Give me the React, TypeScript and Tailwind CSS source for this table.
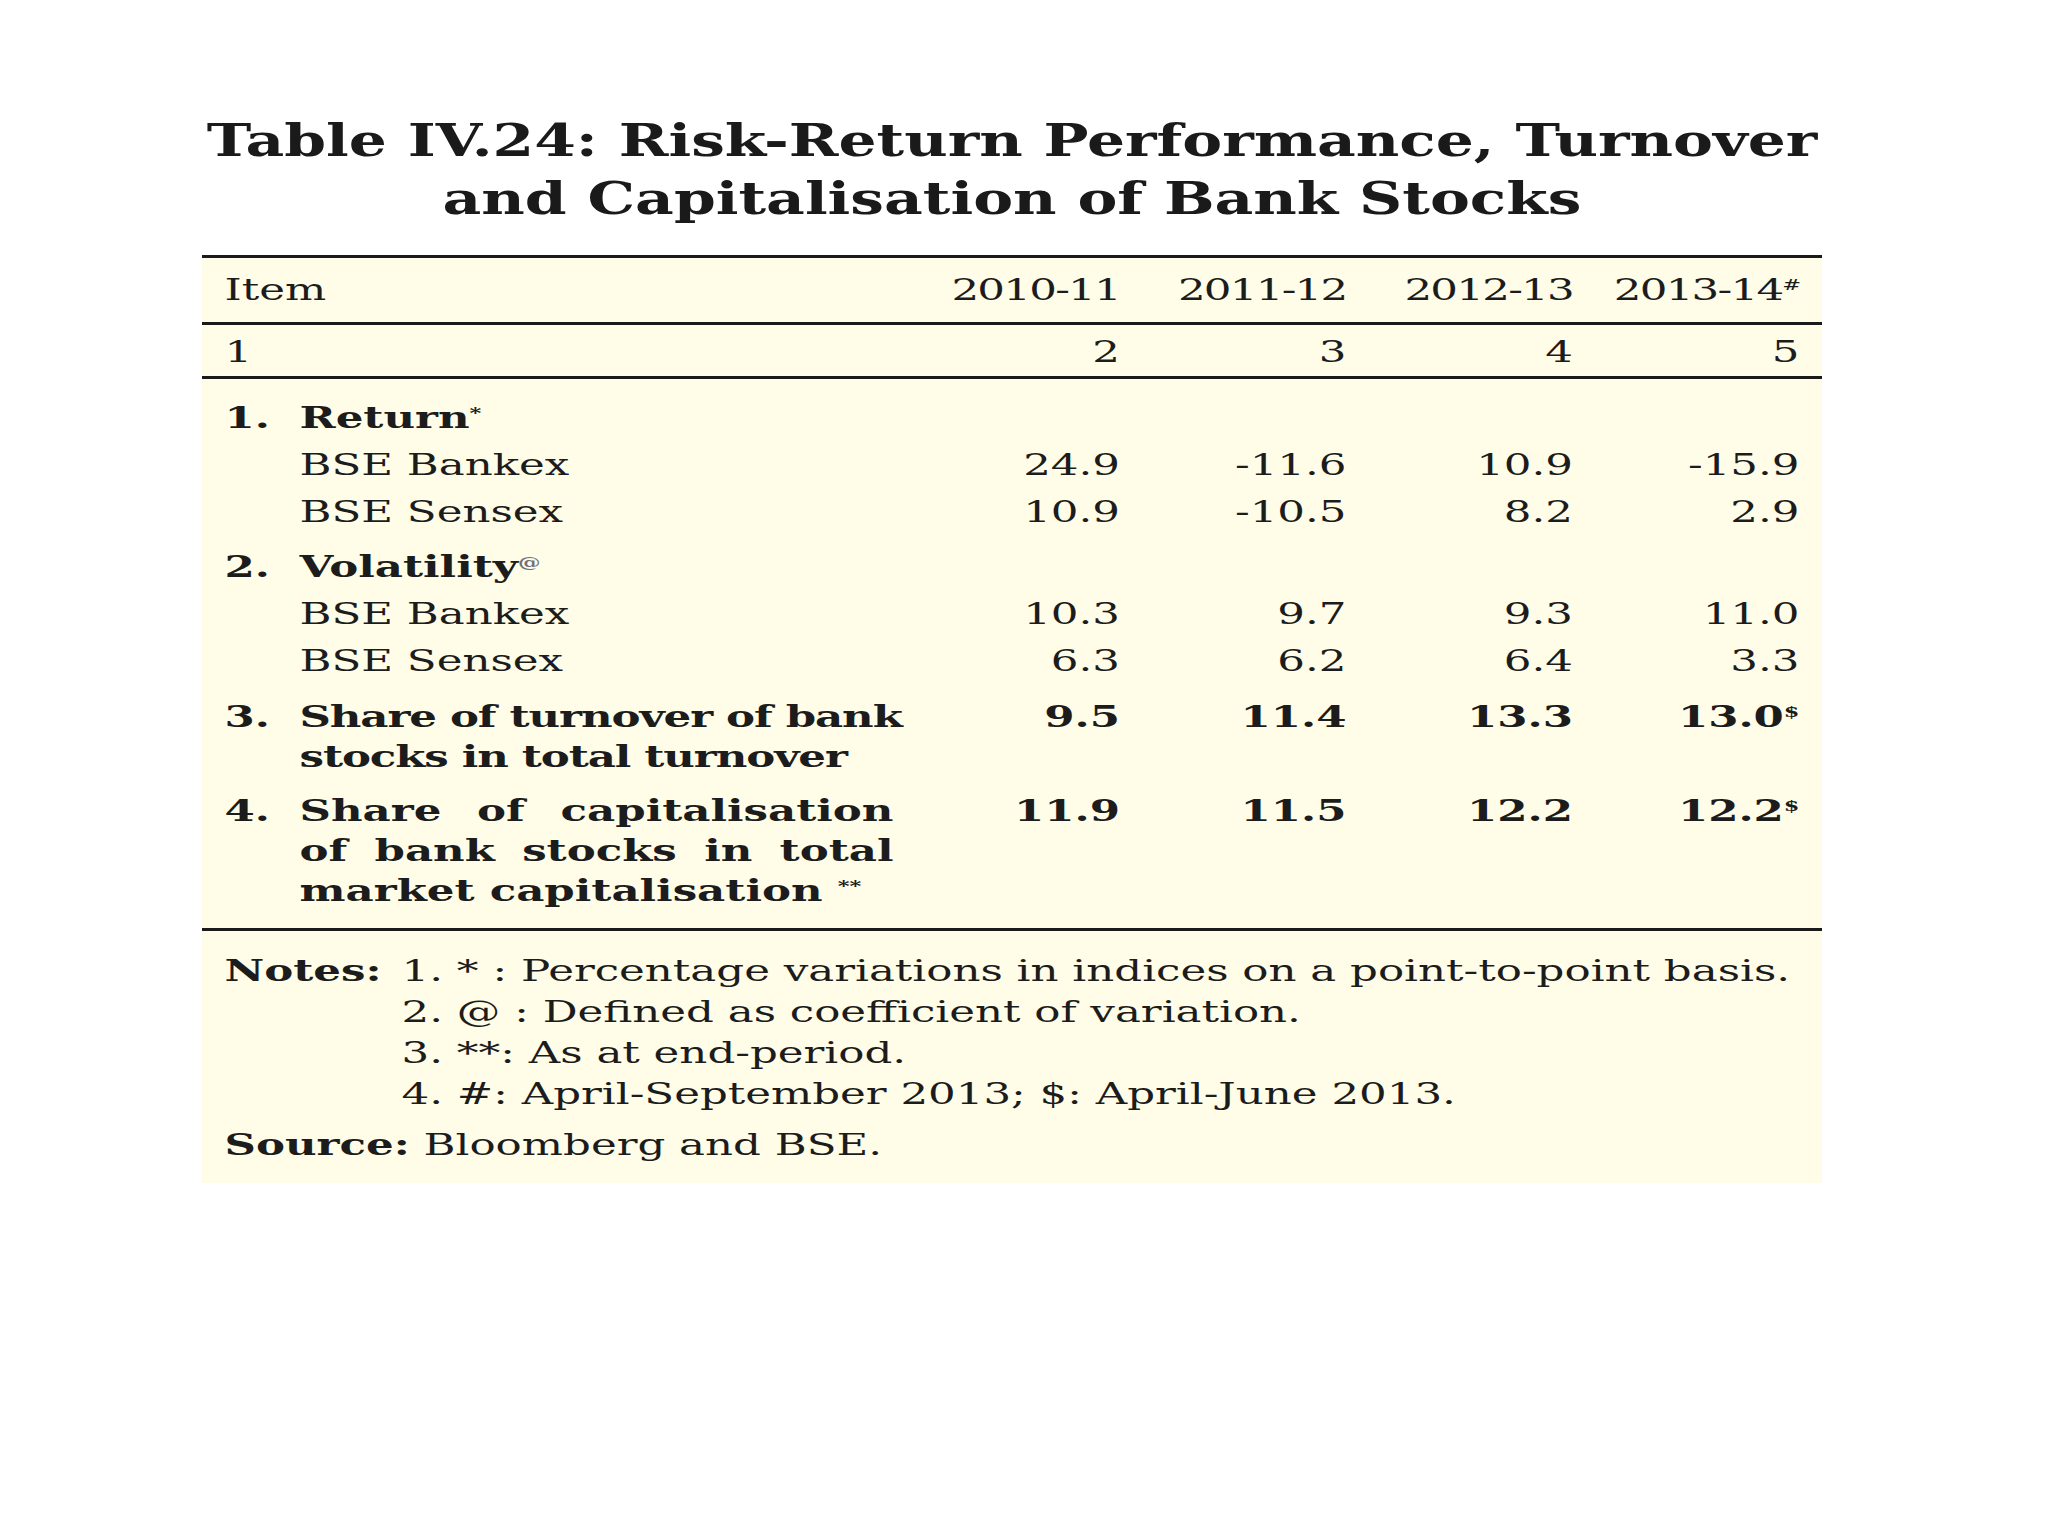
import React from 'react';

interface RowProps {
  num?: string;
  label?: React.ReactNode;
  values?: React.ReactNode[];
  bold?: boolean;
  className?: string;
}

const Sup: React.FC<{ children: React.ReactNode; className?: string }> = ({ children, className = '' }) => (
  <span className={`relative -top-[10px] text-[15px] leading-[0] ${className}`}>{children}</span>
);

const Row: React.FC<RowProps> = ({ num, label, values = [], bold, className = '' }) => (
  <div className={`grid grid-cols-[50px_396px_151px_151px_151px_151px] ${bold ? 'font-bold' : ''} ${className}`}>
    <div>{num}</div>
    <div className="whitespace-nowrap">{label}</div>
    {[0, 1, 2, 3].map((i) => (
      <div key={i} className="text-right whitespace-nowrap">
        {values[i]}
      </div>
    ))}
  </div>
);

const App: React.FC = () => {
  return (
    <div className="min-h-screen w-full bg-white font-['DejaVu_Serif',serif] text-[#1c1c1c]">
      <div className="ml-[202px] w-[1620px] pt-[112px]">
        {/* title */}
        <h1 className="scale-x-[1.36] text-center text-[44px] leading-[58px] font-bold text-[#1a1a1a]">
          Table IV.24: Risk-Return Performance, Turnover
          <br />
          and Capitalisation of Bank Stocks
        </h1>

        <div className="mt-[27px] w-[1080px] origin-left scale-x-150 text-[29px]">
          <div className="border-t-[3px] border-[#1a1a1a] bg-[#fffde8]">
            {/* header */}
            <div className="grid grid-cols-[50px_396px_151px_151px_151px_151px] px-[15px] leading-[64px]">
              <div className="col-span-2">Item</div>
              <div className="text-right tracking-[-0.04em]">2010-11</div>
              <div className="text-right tracking-[-0.04em]">2011-12</div>
              <div className="text-right tracking-[-0.04em]">2012-13</div>
              <div className="text-right whitespace-nowrap tracking-[-0.04em]">
                2013-14<Sup>#</Sup>
              </div>
            </div>
            <div className="border-t-[3px] border-[#1a1a1a]" />
            <div className="grid grid-cols-[50px_396px_151px_151px_151px_151px] px-[15px] pt-[4px] leading-[47px]">
              <div className="col-span-2">1</div>
              <div className="text-right">2</div>
              <div className="text-right">3</div>
              <div className="text-right">4</div>
              <div className="text-right">5</div>
            </div>
            <div className="border-t-[3px] border-[#1a1a1a]" />

            {/* body */}
            <div className="px-[15px] pt-[16px] pb-[17px]">
              <div className="leading-[47px]">
                <Row num="1." bold label={<>Return<Sup>*</Sup></>} />
                <Row label="BSE Bankex" values={['24.9', '-11.6', '10.9', '-15.9']} />
                <Row label="BSE Sensex" values={['10.9', '-10.5', '8.2', '2.9']} />
              </div>
              <div className="mt-[8px] leading-[47px]">
                <Row num="2." bold label={<>Volatility<Sup className="text-gray-500">@</Sup></>} />
                <Row label="BSE Bankex" values={['10.3', '9.7', '9.3', '11.0']} />
                <Row label="BSE Sensex" values={['6.3', '6.2', '6.4', '3.3']} />
              </div>
              <Row
                className="mt-[12px] leading-[40px]"
                num="3."
                bold
                label={
                  <span className="tracking-[-0.025em]">
                    Share of turnover of bank
                    <br />
                    stocks in total turnover
                  </span>
                }
                values={['9.5', '11.4', '13.3', <>13.0<Sup>$</Sup></>]}
              />
              <Row
                className="mt-[14px] leading-[40px]"
                num="4."
                bold
                label={
                  <div className="w-[396px]">
                    <div className="flex justify-between">
                      <span>Share</span>
                      <span>of</span>
                      <span>capitalisation</span>
                    </div>
                    <div className="flex justify-between">
                      <span>of</span>
                      <span>bank</span>
                      <span>stocks</span>
                      <span>in</span>
                      <span>total</span>
                    </div>
                    <div>
                      market capitalisation <Sup>**</Sup>
                    </div>
                  </div>
                }
                values={['11.9', '11.5', '12.2', <>12.2<Sup>$</Sup></>]}
              />
            </div>

            <div className="border-t-[3px] border-[#1a1a1a]" />

            {/* notes */}
            <div className="px-[15px] pt-[20px] pb-[17px]">
              <div className="flex leading-[41px]">
                <div className="w-[118px] shrink-0 font-bold">Notes:</div>
                <div className="whitespace-nowrap">
                  <div>1. * : Percentage variations in indices on a point-to-point basis.</div>
                  <div>2. @ : Defined as coefficient of variation.</div>
                  <div>3. **: As at end-period.</div>
                  <div>4. #: April-September 2013; $: April-June 2013.</div>
                </div>
              </div>
              <div className="mt-[10px] leading-[41px]">
                <span className="font-bold">Source:</span> Bloomberg and BSE.
              </div>
            </div>
          </div>
        </div>
      </div>
    </div>
  );
};

export default App;
